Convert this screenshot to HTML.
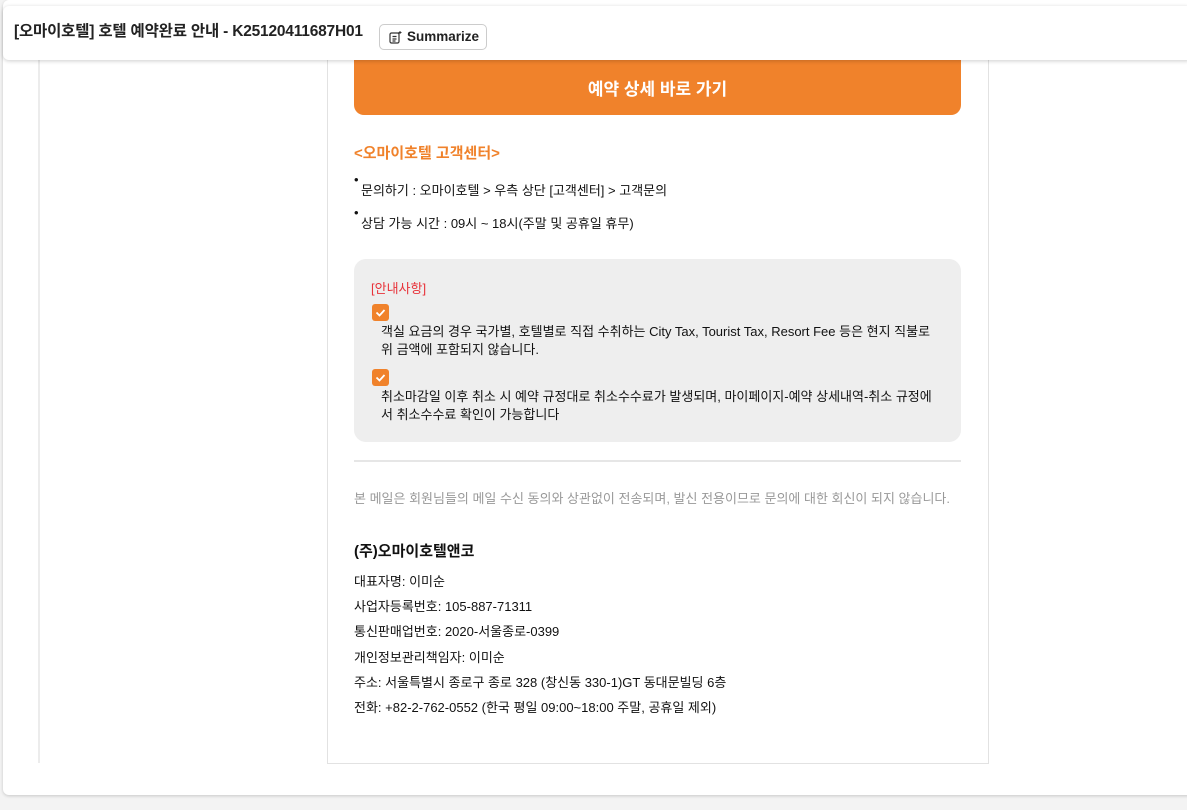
<!DOCTYPE html>
<html><head><meta charset="utf-8"><style>
*{margin:0;padding:0;box-sizing:border-box}
body{width:1187px;height:810px;background:#f3f3f3;font-family:"Liberation Sans","Noto Sans CJK KR",sans-serif;position:relative;overflow:hidden;color:#111}
.a{position:absolute}
.card{left:3px;top:0;width:1190px;height:795px;background:#fff;border-radius:6px;box-shadow:0 1px 3px rgba(0,0,0,.18)}
.hdr{left:3px;top:6px;width:1190px;height:54px;background:#fff;border-radius:6px;box-shadow:0 1px 4px rgba(0,0,0,.2);z-index:2}
.t{font-size:15.5px;font-weight:bold;color:#222;left:14px;top:19px;white-space:nowrap;letter-spacing:-0.2px}
.btn{left:379px;top:24px;width:108px;height:26px;border:1px solid #ccc;border-radius:5px;font-size:13.5px;font-weight:bold;color:#222;padding:4px 0 0 27px}
.s{font-size:13px;white-space:nowrap}
</style></head><body>
<div class="a" style="left:0;top:0;width:1187px;height:6px;background:#f3f3f3"></div>
<div class="a card"></div>
<div class="a" style="left:38px;top:60px;width:2px;height:703px;background:#ececec"></div>
<div class="a" style="left:327px;top:60px;width:662px;height:704px;border:1px solid #e2e2e2;border-top:none"></div>
<div class="a hdr"></div>
<div class="a t" style="z-index:3">[오마이호텔] 호텔 예약완료 안내 - K25120411687H01</div>
<div class="a btn" style="z-index:3"><svg class="a" style="left:8px;top:5px" width="15" height="15" viewBox="0 0 15 15" fill="none" stroke="#333" stroke-width="1.2"><rect x="2" y="3" width="9" height="10" rx="1.5"/><path d="M4.5 6.5h4M4.5 9h4M4.5 11h3"/><path d="M12 1v3M10.5 2.5h3" stroke-width="1"/></svg>Summarize</div>
<div class="a" style="left:354px;top:60px;width:607px;height:55px;background:#f0822b;border-radius:0 0 10px 10px;color:#fff;font-size:17px;font-weight:bold;text-align:center;padding-top:15px">예약 상세 바로 가기</div>
<div class="a s" style="left:354px;top:142px;color:#f0822b;font-size:15px;font-weight:bold">&lt;오마이호텔 고객센터&gt;</div>
<div class="a s" style="left:354px;top:172px">•</div>
<div class="a s" style="left:361px;top:180px">문의하기 : 오마이호텔 &gt; 우측 상단 [고객센터] &gt; 고객문의</div>
<div class="a s" style="left:354px;top:205px">•</div>
<div class="a s" style="left:361px;top:213px">상담 가능 시간 : 09시 ~ 18시(주말 및 공휴일 휴무)</div>
<div class="a" style="left:354px;top:259px;width:607px;height:183px;background:#eee;border-radius:12px"></div>
<div class="a s" style="left:371px;top:278px;color:#e8333a">[안내사항]</div>
<svg class="a" style="left:372px;top:304px" width="17" height="17"><rect width="17" height="17" rx="3" fill="#f0822b"/><path d="M4.5 8.5l3 3 5-5.5" stroke="#fff" stroke-width="1.8" fill="none"/></svg>
<div class="a s" style="left:381px;top:323px;line-height:18px">객실 요금의 경우 국가별, 호텔별로 직접 수취하는 City Tax, Tourist Tax, Resort Fee 등은 현지 직불로<br>위 금액에 포함되지 않습니다.</div>
<svg class="a" style="left:372px;top:369px" width="17" height="17"><rect width="17" height="17" rx="3" fill="#f0822b"/><path d="M4.5 8.5l3 3 5-5.5" stroke="#fff" stroke-width="1.8" fill="none"/></svg>
<div class="a s" style="left:381px;top:388px;line-height:18px">취소마감일 이후 취소 시 예약 규정대로 취소수수료가 발생되며, 마이페이지-예약 상세내역-취소 규정에<br>서 취소수수료 확인이 가능합니다</div>
<div class="a" style="left:354px;top:460px;width:607px;height:2px;background:#e6e6e6"></div>
<div class="a s" style="left:354px;top:488px;color:#999">본 메일은 회원님들의 메일 수신 동의와 상관없이 전송되며, 발신 전용이므로 문의에 대한 회신이 되지 않습니다.</div>
<div class="a s" style="left:354px;top:540px;font-size:15px;font-weight:bold">(주)오마이호텔앤코</div>
<div class="a s" style="left:354px;top:569px;line-height:25.2px">대표자명: 이미순<br>사업자등록번호: 105-887-71311<br>통신판매업번호: 2020-서울종로-0399<br>개인정보관리책임자: 이미순<br>주소: 서울특별시 종로구 종로 328 (창신동 330-1)GT 동대문빌딩 6층<br>전화: +82-2-762-0552 (한국 평일 09:00~18:00 주말, 공휴일 제외)</div>
</body></html>
